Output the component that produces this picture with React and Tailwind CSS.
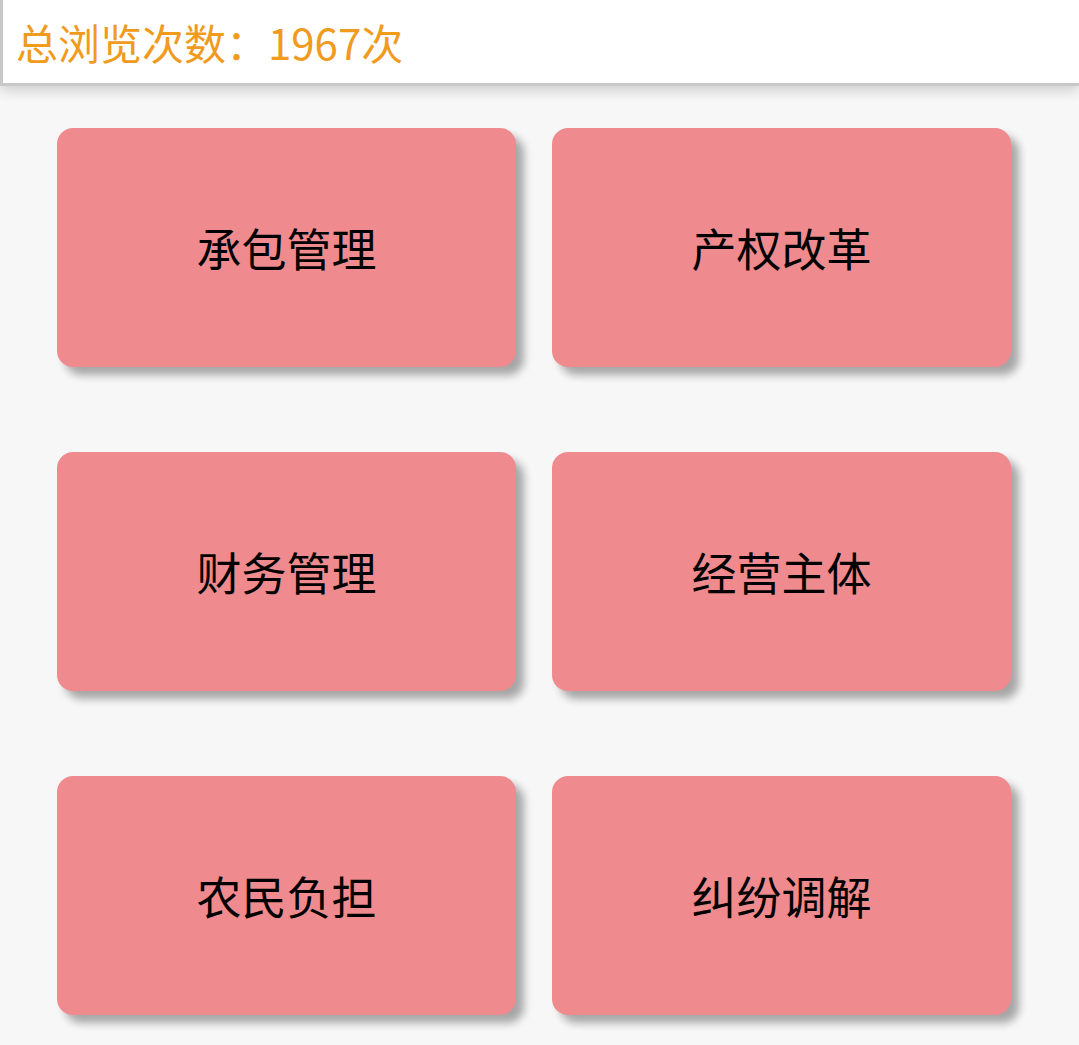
const items = ["承包管理", "产权改革", "财务管理", "经营主体", "农民负担", "纠纷调解"];

export default function App() {
  return (
    <div
      className="min-h-screen bg-[#f7f7f7]"
      style={{ fontFamily: '"Noto Sans CJK SC", "Noto Sans", sans-serif' }}
    >
      <div className="h-[86px] bg-white border-l-[3px] border-b-[3px] border-[#c8c8c8] shadow-[0_5px_12px_rgba(0,0,0,0.16)] flex items-center pl-[13px]">
        <span className="text-[42px] leading-none text-[#f09a1e]">总浏览次数：1967次</span>
      </div>

      <div className="grid grid-cols-[459px_459px] gap-x-[36px] gap-y-[85px] pl-[57px] pt-[42px]">
        {items.map((t) => (
          <div
            key={t}
            className="h-[239px] rounded-[16px] bg-[#ef8b8e] shadow-[8px_8px_8px_rgba(0,0,0,0.33)] flex items-center justify-center"
          >
            <span className="text-[45px] leading-none text-black">{t}</span>
          </div>
        ))}
      </div>
    </div>
  );
}
